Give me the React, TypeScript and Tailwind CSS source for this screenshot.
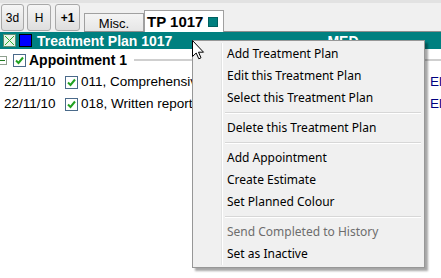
import React from "react";

const menuItems: (string | null)[] = [
  "Add Treatment Plan",
  "Edit this Treatment Plan",
  "Select this Treatment Plan",
  null,
  "Delete this Treatment Plan",
  null,
  "Add Appointment",
  "Create Estimate",
  "Set Planned Colour",
  null,
  "Send Completed to History",
  "Set as Inactive",
];

function CheckBox() {
  return (
    <div className="w-[13px] h-[13px] border border-[#4a6a8a] bg-white flex items-center justify-center">
      <svg width="11" height="11" viewBox="0 0 11 11">
        <path d="M2 5.5 L4.5 8 L9 2.5" stroke="#21a121" strokeWidth="2" fill="none" />
      </svg>
    </div>
  );
}

export default function App() {
  return (
    <div className="relative w-[441px] h-[278px] bg-white overflow-hidden font-['Liberation_Sans',Arial,sans-serif] text-black">
      {/* Toolbar + tabs */}
      <div className="h-[32px] bg-[#f0f0f0] border-t-[3px] border-[#e2e2e2] flex items-end">
        <div className="flex gap-[2px] pl-[1px] pb-[1px] self-end">
          <button className="w-[23px] h-[27px] rounded-[3px] border border-[#a8a8a8] bg-gradient-to-b from-[#f6f6f6] to-[#dedede] text-[12px] leading-none">3d</button>
          <button className="w-[24px] h-[27px] ml-[1px] rounded-[3px] border border-[#a8a8a8] bg-gradient-to-b from-[#f6f6f6] to-[#dedede] text-[12px] leading-none">H</button>
          <button className="w-[25px] h-[27px] ml-[2px] rounded-[3px] border border-[#a8a8a8] bg-gradient-to-b from-[#f6f6f6] to-[#dedede] text-[12px] font-bold leading-none">+1</button>
        </div>
        <div className="flex items-end ml-[4px] flex-1 border-b border-[#8e8e8e] h-full">
          <div className="w-[60px] h-[18px] border border-b-0 border-[#a0a0a0] bg-gradient-to-b from-[#f4f4f4] to-[#e6e6e6] text-[13px] flex items-center justify-center pt-[2px]">
            Misc.
          </div>
          <div className="w-[80px] h-[22px] border border-b-0 border-[#a0a0a0] bg-white -mb-px flex items-center pl-[2px] gap-[5px]">
            <span className="text-[15px] font-bold leading-none">TP 1017</span>
            <span className="w-[10px] h-[10px] bg-[#008080] border border-[#006060]" />
          </div>
        </div>
      </div>

      {/* Plan header */}
      <div className="h-[17px] bg-[#008080] flex items-center text-white">
        <div className="ml-[3px] w-[13px] h-[13px] border border-[#5e8d6e] bg-[#e8f4e8] flex items-center justify-center">
          <svg width="11" height="11" viewBox="0 0 11 11">
            <path d="M1 1 L10 10 M10 1 L1 10" stroke="#2fae2f" strokeWidth="1" />
          </svg>
        </div>
        <div className="ml-[3px] w-[13px] h-[13px] bg-[#0000ff] border border-black" />
        <span className="ml-[5px] text-[14px] font-bold leading-none">Treatment Plan 1017</span>
        <span className="ml-[155px] text-[14px] font-bold leading-none">MED</span>
      </div>

      {/* Appointment row */}
      <div className="h-[22px] flex items-center">
        <div className="-ml-[2px] w-[9px] h-[9px] border border-[#8fa08f] bg-white flex items-center justify-center">
          <div className="w-[5px] h-px bg-[#1d7a1d]" />
        </div>
        <div className="ml-[6px]">
          <CheckBox />
        </div>
        <span className="ml-[3px] text-[14px] font-bold">Appointment 1</span>
        <div className="ml-[7px] flex-1 h-[2px] bg-[#cfcfcf]" />
      </div>

      {/* Item rows */}
      {[
        ["22/11/10", "011, Comprehensive oral evaluation"],
        ["22/11/10", "018, Written report (treatment plan)"],
      ].map(([d, t]) => (
        <div key={t} className="h-[22px] flex items-center text-[13.5px] whitespace-nowrap">
          <span className="ml-[4px] w-[61px]">{d}</span>
          <CheckBox />
          <span className="ml-[3px] w-[111px] overflow-hidden">{t}</span>
          <span className="ml-auto text-[#000080] w-[11px]">El</span>
        </div>
      ))}

      {/* Context menu */}
      <div className="absolute left-[192px] top-[40px] w-[233px] border border-[#979797] bg-[#f0f0f0] p-[2px] shadow-[3px_3px_2px_rgba(0,0,0,0.35)] font-['Noto_Sans',sans-serif] text-[12px]">
        <div className="absolute left-[28px] top-[2px] bottom-[2px] w-px bg-[#e2e3e3]" />
        <div className="absolute left-[29px] top-[2px] bottom-[2px] w-px bg-white" />
        {menuItems.map((m, i) =>
          m === null ? (
            <div key={i} className="h-[8px] flex flex-col justify-center pl-[30px] pr-[1px]">
              <div className="h-px bg-[#d7d7d7]" />
              <div className="h-px bg-white" />
            </div>
          ) : (
            <div
              key={i}
              className={`h-[22px] flex items-center pl-[32px] ${m === "Send Completed to History" ? "text-[#6d6d6d]" : "text-black"}`}
            >
              {m}
            </div>
          )
        )}
      </div>

      {/* Cursor */}
      <svg className="absolute left-[192px] top-[40px]" width="13" height="20" viewBox="0 0 13 20">
        <path d="M0.5 0.5 L0.5 16.5 L4.2 13 L6.8 18.8 L9 17.8 L6.5 12.2 L11.5 12.2 Z" fill="white" stroke="black" strokeWidth="1" />
      </svg>
    </div>
  );
}
